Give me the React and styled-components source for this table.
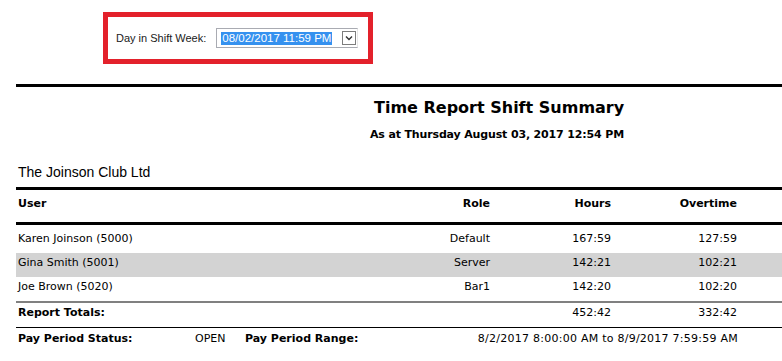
import React from "react";
import styled, { createGlobalStyle } from "styled-components";

const Global = createGlobalStyle`
  html, body { margin: 0; padding: 0; background: #ffffff; }
  body { font-family: "DejaVu Sans", Verdana, sans-serif; color: #000; }
`;

const Page = styled.div`
  width: 782px;
  display: flex;
  flex-direction: column;
`;

const FilterArea = styled.div`
  padding: 12px 0 0 103px;
  display: flex;
`;

const Highlight = styled.div`
  width: 270px;
  height: 52px;
  box-sizing: border-box;
  border: 5px solid #e3212b;
  display: flex;
  align-items: center;
  padding-left: 8px;
  gap: 10px;
`;

const FieldLabel = styled.span`
  font-family: "Liberation Sans", Arial, sans-serif;
  font-size: 11px;
  color: #1a1a1a;
`;

const DateInput = styled.div`
  width: 142px;
  height: 20px;
  box-sizing: border-box;
  border: 1px solid #a9abb2;
  border-right-color: #e6e6e6;
  display: flex;
  align-items: center;
  justify-content: space-between;
  padding: 0 1px 0 4px;
  background: #fff;
`;

const Selected = styled.span`
  white-space: nowrap;
  background: #3591ef;
  color: #ffffff;
  font-family: "Liberation Sans", Arial, sans-serif;
  font-size: 11.5px;
  line-height: 13px;
  padding: 0 1px;
`;

const DropButton = styled.div`
  width: 14px;
  height: 14px;
  box-sizing: border-box;
  border: 1px solid #7d7d7d;
  background: #fff;
  display: flex;
  align-items: center;
  justify-content: center;
`;

const Report = styled.div`
  margin-left: 16px;
  display: flex;
  flex-direction: column;
`;

const Rule = styled.div`
  height: ${(p) => p.$h || 3}px;
  background: ${(p) => p.$c || "#000"};
  margin-top: ${(p) => p.$mt || 0}px;
`;

const Title = styled.div`
  margin-top: 11px;
  padding-left: 358px;
  font-size: 16px;
  font-weight: bold;
  line-height: 20px;
  text-align: left;
`;

const Subtitle = styled.div`
  margin-top: 10px;
  padding-left: 354px;
  font-size: 11px;
  font-weight: bold;
  line-height: 14px;
  letter-spacing: -0.15px;
`;

const Company = styled.div`
  margin-top: 22px;
  padding-left: 2px;
  font-family: "Liberation Sans", Arial, sans-serif;
  font-size: 14px;
  line-height: 16px;
`;

const Grid = styled.div`
  display: grid;
  grid-template-columns: 1fr 100px 121px 126px 45px;
  font-size: 11px;
  line-height: 14px;
  background: ${(p) => (p.$shade ? "#d3d3d3" : "transparent")};
  padding: ${(p) => p.$pad || "3px 0 7px"};
  font-weight: ${(p) => (p.$bold ? "bold" : "normal")};
`;

const Cell = styled.div`
  padding-left: ${(p) => (p.$first ? 2 : 0)}px;
  text-align: ${(p) => (p.$right ? "right" : "left")};
  font-weight: ${(p) => (p.$bold ? "bold" : "inherit")};
  white-space: nowrap;
`;

const Spacer = styled.div`
  height: ${(p) => p.$h}px;
`;

const FooterRow = styled.div`
  display: flex;
  font-size: 11px;
  line-height: 14px;
  padding: 4px 44px 6px 2px;
  white-space: nowrap;
`;

const FooterLabel = styled.span`
  font-weight: bold;
  width: ${(p) => (p.$w ? `${p.$w}px` : "auto")};
  flex: ${(p) => (p.$grow ? 1 : "none")};
`;

const FooterValue = styled.span`
  width: ${(p) => (p.$w ? `${p.$w}px` : "auto")};
  letter-spacing: ${(p) => p.$ls || 0}px;
`;

const rows = [
  { user: "Karen Joinson (5000)", role: "Default", hours: "167:59", ot: "127:59" },
  { user: "Gina Smith (5001)", role: "Server", hours: "142:21", ot: "102:21" },
  { user: "Joe Brown (5020)", role: "Bar1", hours: "142:20", ot: "102:20" },
];

export default function App() {
  return (
    <Page>
      <Global />
      <FilterArea>
        <Highlight>
          <FieldLabel>Day in Shift Week:</FieldLabel>
          <DateInput>
            <Selected>08/02/2017 11:59 PM</Selected>
            <DropButton>
              <svg width="10" height="10" viewBox="0 0 10 10">
                <path d="M2 3.5 L5 6.5 L8 3.5" fill="none" stroke="#333" strokeWidth="1.4" />
              </svg>
            </DropButton>
          </DateInput>
        </Highlight>
      </FilterArea>
      <Report>
        <Rule $mt={20} $h={3} />
        <Title>Time Report Shift Summary</Title>
        <Subtitle>As at Thursday August 03, 2017 12:54 PM</Subtitle>
        <Company>The Joinson Club Ltd</Company>
        <Rule $mt={7} $h={3} />
        <Grid $bold $pad="7px 0 11px">
          <Cell $first>User</Cell>
          <Cell $right>Role</Cell>
          <Cell $right>Hours</Cell>
          <Cell $right>Overtime</Cell>
          <Cell />
        </Grid>
        <Rule $h={3} />
        <Spacer $h={4} />
        {rows.map((r, i) => (
          <Grid key={r.user} $shade={i === 1}>
            <Cell $first>{r.user}</Cell>
            <Cell $right>{r.role}</Cell>
            <Cell $right>{r.hours}</Cell>
            <Cell $right>{r.ot}</Cell>
            <Cell />
          </Grid>
        ))}
        <Rule $h={2} $c="#808080" />
        <Grid>
          <Cell $first $bold>Report Totals:</Cell>
          <Cell $right />
          <Cell $right>452:42</Cell>
          <Cell $right>332:42</Cell>
          <Cell />
        </Grid>
        <Rule $h={1} />
        <FooterRow>
          <FooterLabel $w={177}>Pay Period Status:</FooterLabel>
          <FooterValue $w={50}>OPEN</FooterValue>
          <FooterLabel $grow>Pay Period Range:</FooterLabel>
          <FooterValue $ls={0.25}>8/2/2017 8:00:00 AM to 8/9/2017 7:59:59 AM</FooterValue>
        </FooterRow>
      </Report>
    </Page>
  );
}
